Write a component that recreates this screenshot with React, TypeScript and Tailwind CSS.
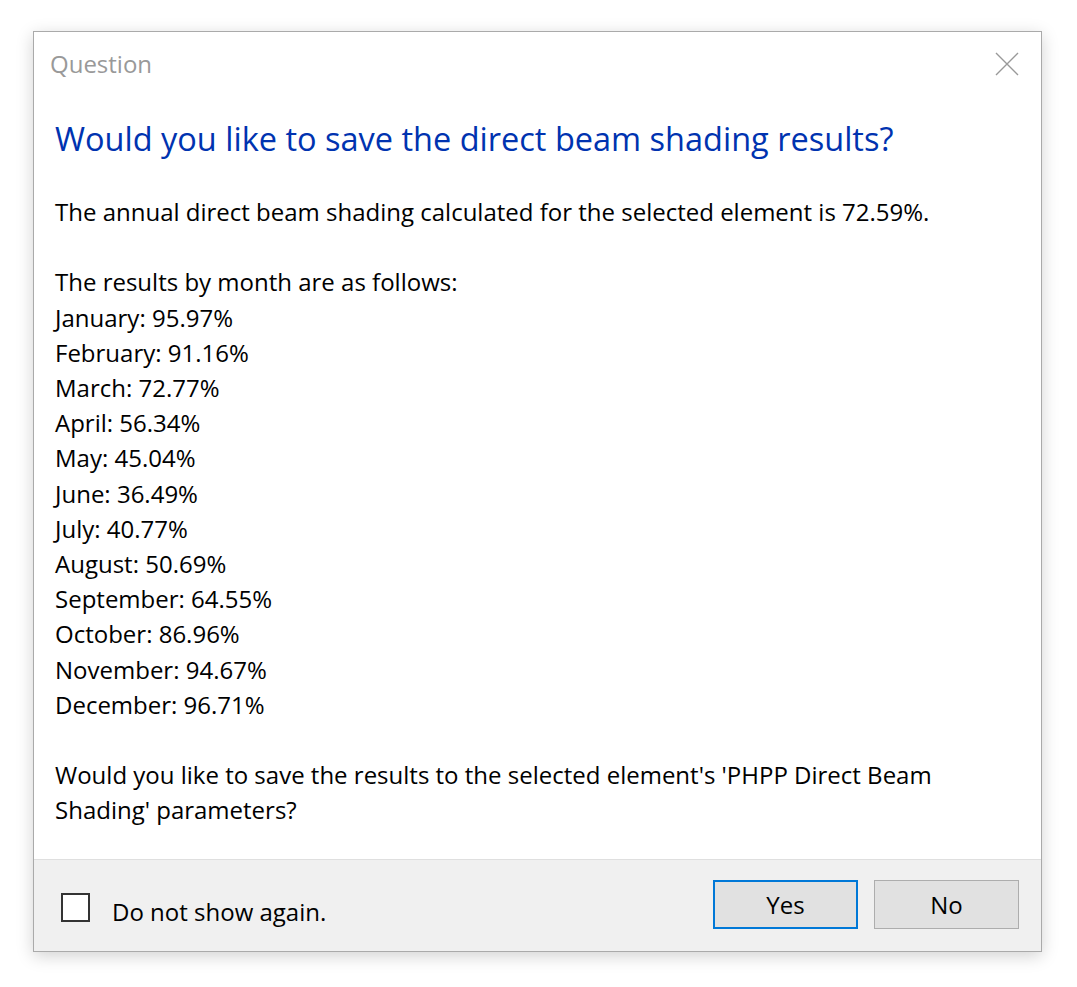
import React from "react";

const months: [string, string][] = [
  ["January", "95.97%"],
  ["February", "91.16%"],
  ["March", "72.77%"],
  ["April", "56.34%"],
  ["May", "45.04%"],
  ["June", "36.49%"],
  ["July", "40.77%"],
  ["August", "50.69%"],
  ["September", "64.55%"],
  ["October", "86.96%"],
  ["November", "94.67%"],
  ["December", "96.71%"],
];

export default function App() {
  return (
    <div
      className="w-[1077px] h-[987px] bg-white pt-[31px] pl-[33px]"
      style={{ fontFamily: '"Open Sans", "Noto Sans", sans-serif' }}
    >
      <div className="w-[1009px] h-[921px] border border-[#aaaaaa] bg-white flex flex-col shadow-[0_4px_16px_rgba(0,0,0,0.18)]">
        <div className="flex items-start justify-between h-[64px]">
          <div className="pl-[16px] pt-[16px] text-[24px] leading-[32px] text-[#999999]">Question</div>
          <div className="pt-[20px] pr-[22px]">
            <svg width="24" height="24" viewBox="0 0 24 24">
              <path d="M1 1 L23 23 M23 1 L1 23" stroke="#999999" strokeWidth="1.4" fill="none" />
            </svg>
          </div>
        </div>
        <div className="pl-[21px] pt-[23px] text-[32.5px] leading-[40px] text-[#0033b0]">
          Would you like to save the direct beam shading results?
        </div>
        <div className="pl-[21px] pt-[35px] text-[24px] leading-[35.2px] text-black flex-1">
          <div>The annual direct beam shading calculated for the selected element is 72.59%.</div>
          <div className="h-[35.2px]" />
          <div>The results by month are as follows:</div>
          {months.map(([m, v]) => (
            <div key={m}>
              {m}: {v}
            </div>
          ))}
          <div className="h-[35.2px]" />
          <div>Would you like to save the results to the selected element's 'PHPP Direct Beam</div>
          <div>Shading' parameters?</div>
        </div>
        <div className="h-[92px] bg-[#f0f0f0] border-t border-[#dfdfdf] flex items-center justify-between pl-[27px] pr-[22px]">
          <div className="flex items-center gap-[22px] pt-[13px]">
            <div className="w-[29px] h-[29px] mb-[9px] border-2 border-[#333333] bg-white" />
            <span className="text-[24px] text-black">Do not show again.</span>
          </div>
          <div className="flex gap-[16px] mb-[2px]">
            <button className="w-[145px] h-[49px] bg-[#e1e1e1] border-2 border-[#0078d7] text-[24px] text-black">
              Yes
            </button>
            <button className="w-[145px] h-[49px] bg-[#e1e1e1] border border-[#adadad] text-[24px] text-black">
              No
            </button>
          </div>
        </div>
      </div>
    </div>
  );
}
